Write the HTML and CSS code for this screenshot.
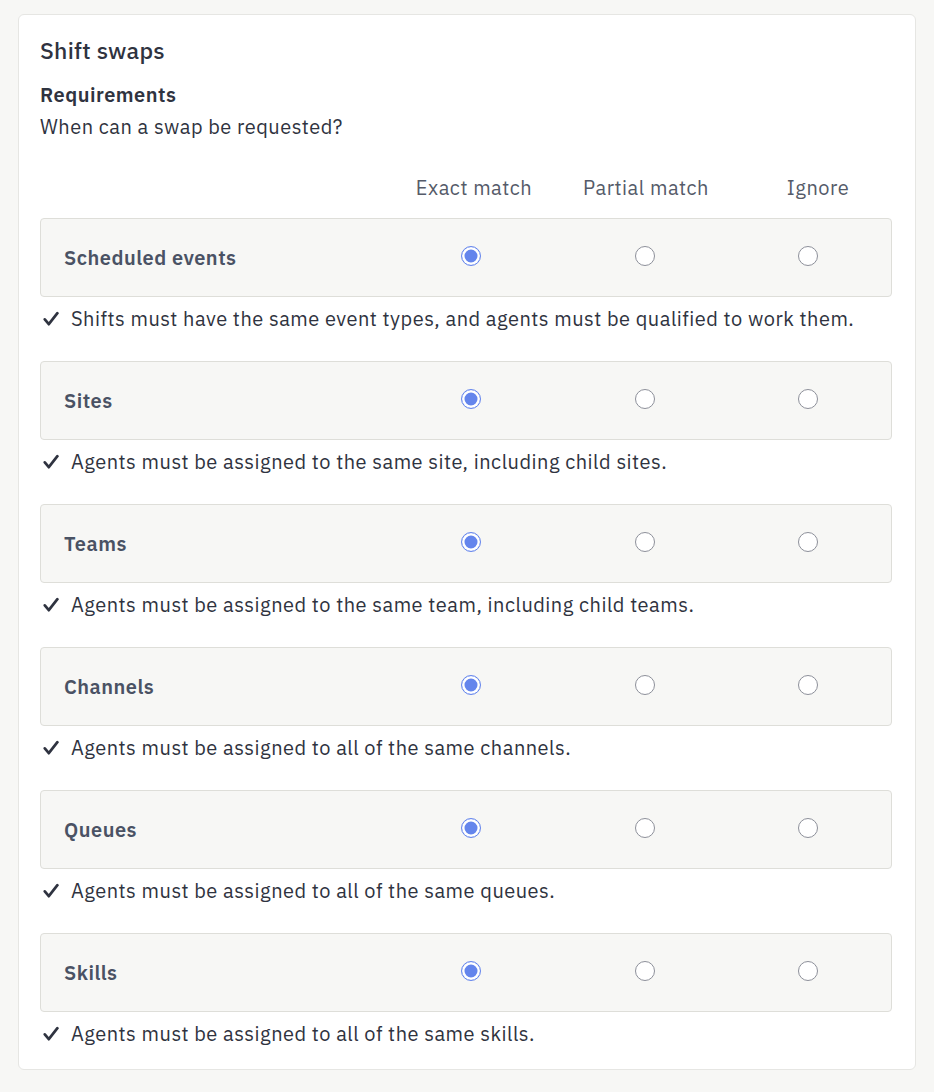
FILE: index.html
```html
<!DOCTYPE html>
<html lang="en">
<head>
<meta charset="utf-8">
<title>Shift swaps</title>
<link rel="stylesheet" href="styles.css">
</head>
<body>
<section class="card">
  <h1 class="title">Shift swaps</h1>
  <h2 class="subtitle">Requirements</h2>
  <p class="question">When can a swap be requested?</p>

  <div class="head">
    <span></span>
    <span class="col">Exact match</span>
    <span class="col">Partial match</span>
    <span class="col">Ignore</span>
  </div>

  <div class="req">
    <div class="row">
      <span class="label">Scheduled events</span>
      <span class="radio on"></span>
      <span class="radio"></span>
      <span class="radio"></span>
    </div>
    <p class="desc"><svg class="check" viewBox="0 0 16 16"><path d="M1.8 8.4 L5.8 13.2 L14.4 2.2" /></svg>Shifts must have the same event types, and agents must be qualified to work them.</p>
  </div>

  <div class="req">
    <div class="row">
      <span class="label">Sites</span>
      <span class="radio on"></span>
      <span class="radio"></span>
      <span class="radio"></span>
    </div>
    <p class="desc"><svg class="check" viewBox="0 0 16 16"><path d="M1.8 8.4 L5.8 13.2 L14.4 2.2" /></svg>Agents must be assigned to the same site, including child sites.</p>
  </div>

  <div class="req">
    <div class="row">
      <span class="label">Teams</span>
      <span class="radio on"></span>
      <span class="radio"></span>
      <span class="radio"></span>
    </div>
    <p class="desc"><svg class="check" viewBox="0 0 16 16"><path d="M1.8 8.4 L5.8 13.2 L14.4 2.2" /></svg>Agents must be assigned to the same team, including child teams.</p>
  </div>

  <div class="req">
    <div class="row">
      <span class="label">Channels</span>
      <span class="radio on"></span>
      <span class="radio"></span>
      <span class="radio"></span>
    </div>
    <p class="desc"><svg class="check" viewBox="0 0 16 16"><path d="M1.8 8.4 L5.8 13.2 L14.4 2.2" /></svg>Agents must be assigned to all of the same channels.</p>
  </div>

  <div class="req">
    <div class="row">
      <span class="label">Queues</span>
      <span class="radio on"></span>
      <span class="radio"></span>
      <span class="radio"></span>
    </div>
    <p class="desc"><svg class="check" viewBox="0 0 16 16"><path d="M1.8 8.4 L5.8 13.2 L14.4 2.2" /></svg>Agents must be assigned to all of the same queues.</p>
  </div>

  <div class="req">
    <div class="row">
      <span class="label">Skills</span>
      <span class="radio on"></span>
      <span class="radio"></span>
      <span class="radio"></span>
    </div>
    <p class="desc"><svg class="check" viewBox="0 0 16 16"><path d="M1.8 8.4 L5.8 13.2 L14.4 2.2" /></svg>Agents must be assigned to all of the same skills.</p>
  </div>
</section>
</body>
</html>
```

FILE: styles.css
```css
* { box-sizing: border-box; }

html, body {
  margin: 0;
  background: #f7f7f5;
}

body {
  padding: 14px 18px 22px;
  font-family: "IBM Plex Sans", "Open Sans", "Noto Sans", sans-serif;
  font-size: 20px;
  letter-spacing: 0.5px;
  color: #2f3340;
}

.card {
  width: 898px;
  background: #ffffff;
  border: 1px solid #e6e6e3;
  border-radius: 6px;
  padding: 21px 23px 21px 21px;
}

.title {
  margin: 0;
  font-size: 23px;
  font-weight: 500;
  letter-spacing: 0.3px;
  line-height: 28px;
  color: #2f3340;
}

.subtitle {
  margin: 17px 0 0;
  font-size: 20px;
  font-weight: 600;
  line-height: 28px;
  color: #2f3340;
}

.question {
  margin: 4px 0 0;
  line-height: 28px;
}

.head {
  display: grid;
  grid-template-columns: 1fr 140px 140px 140px;
  column-gap: 32px;
  padding-right: 4px;
  margin-top: 33px;
  line-height: 28px;
  color: #555b69;
}

.head .col {
  text-align: center;
}

.req {
  margin-top: 16px;
}

.req + .req {
  margin-top: 28px;
}

.row {
  display: grid;
  grid-template-columns: 1fr 142px 206px 120px;
  align-items: center;
  height: 79px;
  padding: 0 23px;
  background: #f7f7f5;
  border: 1px solid #deded9;
  border-radius: 4px;
}

.label {
  font-weight: 600;
  color: #4a5264;
}

.radio {
  justify-self: center;
  width: 20px;
  height: 20px;
  margin-bottom: 3px;
  border-radius: 50%;
  background: #ffffff;
  border: 1.5px solid #8d909a;
}

.radio.on {
  border-color: #6485ec;
  box-shadow: inset 0 0 0 2.5px #ffffff, inset 0 0 0 10px #6485ec;
}

.desc {
  display: flex;
  align-items: center;
  margin: 8px 0 0;
  line-height: 28px;
  color: #2f3340;
}

.check {
  width: 16px;
  height: 16px;
  margin: 0 12px 0 3px;
  flex: none;
}

.check path {
  fill: none;
  stroke: #2f3340;
  stroke-width: 2.7;
  stroke-linecap: round;
  stroke-linejoin: round;
}
```
